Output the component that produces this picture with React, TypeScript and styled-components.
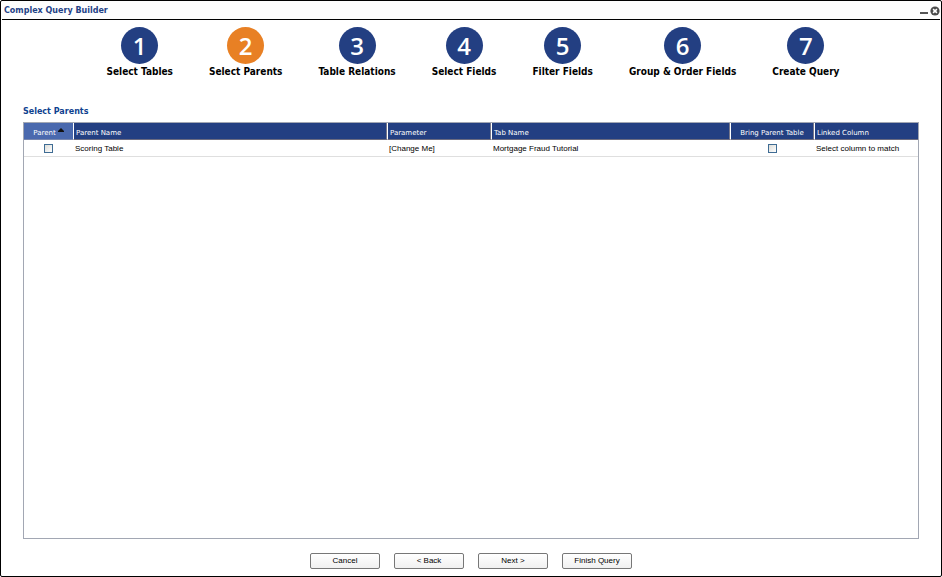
import React, { useState } from 'react';
import styled, { createGlobalStyle } from 'styled-components';

const navy = '#233f82';
const verdana = '"DejaVu Sans", Verdana, sans-serif';
const arial = '"Liberation Sans", Arial, sans-serif';

const GlobalStyle = createGlobalStyle`
  * { box-sizing: border-box; }
  body { margin: 0; background: #fff; font: 8px/10px ${arial}; color: #000; }
`;

const Window = styled.div`
  display: flex;
  flex-direction: column;
  min-height: 100vh;
  border: 1px solid #000;
  border-radius: 2px;
`;

const TitleBar = styled.header`
  display: flex;
  align-items: center;
  justify-content: space-between;
  height: 19px;
  margin: 0 1px;
  padding: 2px 0 0 2px;
  border-bottom: 1px solid #000;
  background: #fdfdfd;
`;

const Title = styled.h1`
  margin: 0;
  font: bold 8px/14px ${verdana};
  color: #1f4287;
`;

const WindowControls = styled.div`
  display: flex;
  gap: 1px;
`;

const IconButton = styled.button`
  display: flex;
  padding: 0;
  border: 0;
  background: none;
  cursor: pointer;
`;

const Steps = styled.ol`
  display: flex;
  justify-content: center;
  gap: 36px;
  margin: 0;
  padding: 7px 0 0 4px;
  list-style: none;
`;

const Step = styled.li`
  display: flex;
  flex-direction: column;
  align-items: center;
  font: bold 10px/16px "DejaVu Sans Condensed", "DejaVu Sans", Tahoma, sans-serif;
  white-space: nowrap;
`;

const StepNumber = styled.span<{ $active: boolean }>`
  display: flex;
  align-items: center;
  justify-content: center;
  width: 37px;
  height: 37px;
  border-radius: 50%;
  background: ${p => (p.$active ? '#e88024' : navy)};
  color: #fff;
  font: 600 24px/38px "Open Sans", "Noto Sans", sans-serif;
`;

const Main = styled.main`
  display: flex;
  flex: 1;
  flex-direction: column;
  padding: 26px 22px 0;
`;

const SectionTitle = styled.h2`
  margin: 0 0 4px;
  font: bold 8px/12px ${verdana};
  color: #0f428f;
`;

const GridFrame = styled.div`
  flex: 1;
  border: 1px solid #a2a7b3;
`;

const Table = styled.table`
  width: 100%;
  table-layout: fixed;
  border-collapse: separate;
  border-spacing: 0;
`;

const Col = styled.col<{ $width: string }>`
  width: ${p => p.$width};
`;

const HeaderCell = styled.th<{ $sorted?: boolean; $center?: boolean }>`
  height: 17px;
  padding: ${p => (p.$center || p.$sorted ? '3px 0 0' : '3px 1px 0 2px')};
  border-left: ${p => (p.$sorted ? 0 : '1px solid #fff')};
  border-bottom: 1px solid ${p => (p.$sorted ? '#7786ae' : '#6b6b80')};
  background: ${p => (p.$sorted ? '#4a69ae' : navy)};
  color: #fff;
  font: 7px/10px ${verdana};
  text-align: ${p => (p.$center || p.$sorted ? 'center' : 'left')};
  white-space: nowrap;

  &:not(:first-child):not(:last-child) {
    border-right: 1px solid #77778a;
  }
`;

const SortButton = styled.button`
  display: inline-flex;
  gap: 2px;
  padding: 0;
  border: 0;
  background: none;
  color: inherit;
  font: inherit;
  cursor: pointer;
`;

const Cell = styled.td<{ $center?: boolean }>`
  height: 17px;
  padding: ${p => (p.$center ? '0' : '1px 1px 0 2px')};
  border-bottom: 1px solid #dfdfdf;
  text-align: ${p => (p.$center ? 'center' : 'left')};
  white-space: nowrap;
`;

const Checkbox = styled.input`
  appearance: none;
  display: block;
  width: 9px;
  height: 9px;
  margin: 0 auto;
  border: 1px solid #3f6c94;
  background: linear-gradient(135deg, #dcdcd7, #fff);

  &:checked {
    background: ${navy};
    box-shadow: inset 0 0 0 1px #fff;
  }
`;

const Footer = styled.footer`
  display: flex;
  justify-content: center;
  gap: 14px;
  padding: 14px 0 7px;
`;

const Button = styled.button`
  width: 70px;
  height: 16px;
  padding: 0;
  border: 1px solid #777;
  border-radius: 2px;
  background: linear-gradient(#fff, #f0f0f0);
  color: #000;
  font: 8px/12px ${arial};
  cursor: pointer;
`;

const steps = [
  'Select Tables',
  'Select Parents',
  'Table Relations',
  'Select Fields',
  'Filter Fields',
  'Group & Order Fields',
  'Create Query',
];

const rows = [
  {
    name: 'Scoring Table',
    parameter: '[Change Me]',
    tab: 'Mortgage Fraud Tutorial',
    linked: 'Select column to match',
  },
];

export default function App() {
  const [ascending, setAscending] = useState(true);
  const sorted = ascending ? rows : [...rows].reverse();

  return (
    <Window>
      <GlobalStyle />
      <TitleBar>
        <Title>Complex Query Builder</Title>
        <WindowControls>
          <IconButton type="button" aria-label="Minimize">
            <svg width="9" height="10" viewBox="0 0 9 10">
              <path d="M0 6h8v2H0z" fill="#555" />
            </svg>
          </IconButton>
          <IconButton type="button" aria-label="Close">
            <svg width="10" height="10" viewBox="0 0 10 10">
              <circle cx="5" cy="5" r="4.6" fill="#4c4c4c" />
              <path d="M3.1 3.1l3.8 3.8M6.9 3.1L3.1 6.9" stroke="#fff" strokeWidth="1.5" />
            </svg>
          </IconButton>
        </WindowControls>
      </TitleBar>

      <Steps>
        {steps.map((label, i) => (
          <Step key={label} aria-current={i === 1 ? 'step' : undefined}>
            <StepNumber $active={i === 1}>{i + 1}</StepNumber>
            {label}
          </Step>
        ))}
      </Steps>

      <Main>
        <SectionTitle>Select Parents</SectionTitle>
        <GridFrame>
          <Table>
            <colgroup>
              <Col $width="49px" />
              <Col $width="314px" />
              <Col $width="104px" />
              <Col $width="auto" />
              <Col $width="84px" />
              <Col $width="104px" />
            </colgroup>
            <thead>
              <tr>
                <HeaderCell $sorted aria-sort={ascending ? 'ascending' : 'descending'}>
                  <SortButton type="button" onClick={() => setAscending(a => !a)}>
                    Parent
                    <svg width="6" height="4" viewBox="0 0 6 4">
                      <path d={ascending ? 'M3 0l3 3v1H0V3z' : 'M3 4l3-3V0H0v1z'} fill="#111" />
                    </svg>
                  </SortButton>
                </HeaderCell>
                <HeaderCell>Parent Name</HeaderCell>
                <HeaderCell>Parameter</HeaderCell>
                <HeaderCell>Tab Name</HeaderCell>
                <HeaderCell $center>Bring Parent Table</HeaderCell>
                <HeaderCell>Linked Column</HeaderCell>
              </tr>
            </thead>
            <tbody>
              {sorted.map(row => (
                <tr key={row.name}>
                  <Cell $center>
                    <Checkbox type="checkbox" aria-label={`Use ${row.name} as parent`} />
                  </Cell>
                  <Cell>{row.name}</Cell>
                  <Cell>{row.parameter}</Cell>
                  <Cell>{row.tab}</Cell>
                  <Cell $center>
                    <Checkbox type="checkbox" aria-label={`Bring parent table ${row.name}`} />
                  </Cell>
                  <Cell>{row.linked}</Cell>
                </tr>
              ))}
            </tbody>
          </Table>
        </GridFrame>
      </Main>

      <Footer>
        <Button type="button">Cancel</Button>
        <Button type="button">&lt; Back</Button>
        <Button type="button">Next &gt;</Button>
        <Button type="button">Finish Query</Button>
      </Footer>
    </Window>
  );
}
